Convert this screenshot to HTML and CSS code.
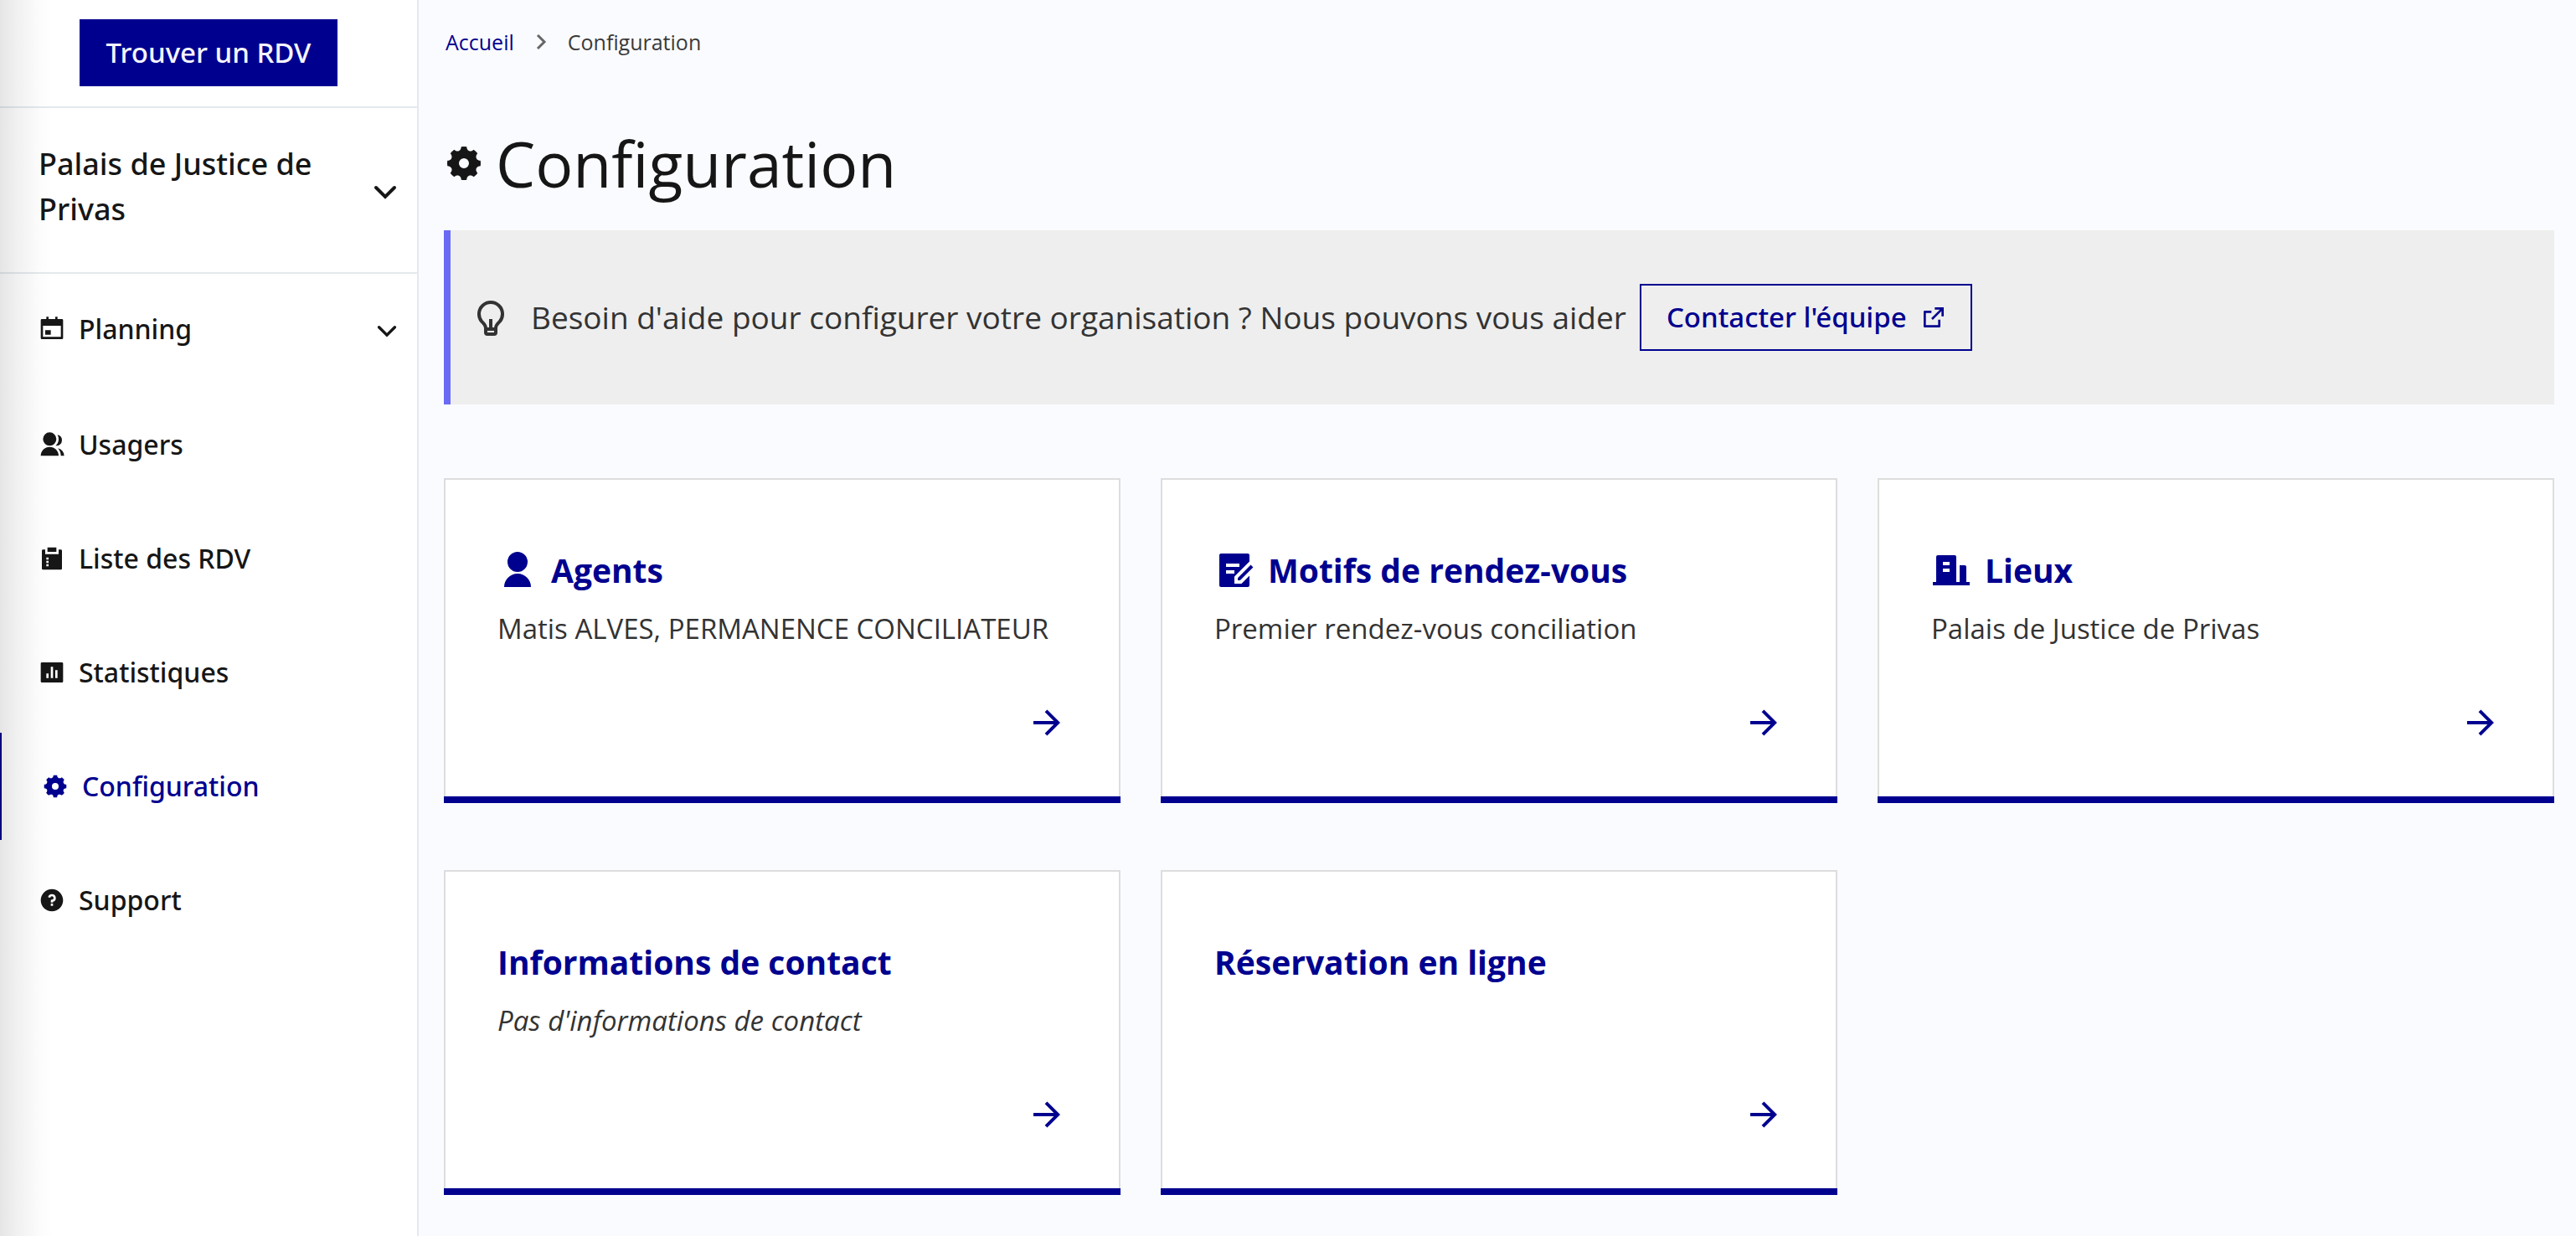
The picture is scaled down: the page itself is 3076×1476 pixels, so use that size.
FILE: index.html
```html
<!DOCTYPE html>
<html lang="fr">
<head>
  <meta charset="utf-8">
  <meta name="viewport" content="width=device-width, initial-scale=1">
  <title>Configuration</title>
  <link rel="stylesheet" href="styles.css">
</head>
<body>
  <svg class="sprite" aria-hidden="true">
    <symbol id="i-calendar" viewBox="0 0 24 24"><path d="M17 3h4a1 1 0 0 1 1 1v16a1 1 0 0 1-1 1H3a1 1 0 0 1-1-1V4a1 1 0 0 1 1-1h4V1h2v2h6V1h2v2zM4 9v10h16V9H4zm2 4h5v4H6v-4z"/></symbol>
    <symbol id="i-group" viewBox="0 0 24 24"><path d="M2 22a8 8 0 1 1 16 0H2zm8-9a6 6 0 1 1 0-12 6 6 0 0 1 0 12zm7.363 2.233A7.505 7.505 0 0 1 22.983 22H20c0-2.61-1-4.986-2.637-6.767zm-2.023-2.276A7.98 7.98 0 0 0 18 7a7.964 7.964 0 0 0-1.015-3.903A5 5 0 0 1 21 8a4.999 4.999 0 0 1-5.66 4.957z"/></symbol>
    <symbol id="i-todo" viewBox="0 0 24 24"><path d="M6 4v4h12V4h2.007c.548 0 .993.445.993.993v16.014a.994.994 0 0 1-.993.993H3.993A.994.994 0 0 1 3 21.007V4.993C3 4.445 3.445 4 3.993 4H6zm3 13H7v2h2v-2zm0-3H7v2h2v-2zm0-3H7v2h2v-2zm7-9v4H8V2h8z"/></symbol>
    <symbol id="i-chart" viewBox="0 0 24 24"><path d="M3 3h18a1 1 0 0 1 1 1v16a1 1 0 0 1-1 1H3a1 1 0 0 1-1-1V4a1 1 0 0 1 1-1zm4 10v4h2v-4H7zm4-6v10h2V7h-2zm4 3v7h2v-7h-2z"/></symbol>
    <symbol id="i-gear" viewBox="0 0 24 24"><path d="M2.132 13.63a9.942 9.942 0 0 1 0-3.26c1.102.026 2.092-.502 2.477-1.431.385-.93.058-2.004-.74-2.763a9.942 9.942 0 0 1 2.306-2.307c.76.798 1.834 1.125 2.764.74.93-.385 1.457-1.376 1.43-2.477a9.942 9.942 0 0 1 3.262 0c-.027 1.102.501 2.092 1.43 2.477.93.385 2.004.058 2.763-.74a9.942 9.942 0 0 1 2.307 2.306c-.798.76-1.125 1.834-.74 2.764.385.93 1.376 1.457 2.477 1.43a9.942 9.942 0 0 1 0 3.262c-1.102-.027-2.092.501-2.477 1.43-.385.93-.058 2.004.74 2.763a9.942 9.942 0 0 1-2.306 2.307c-.76-.798-1.834-1.125-2.764-.74-.93.385-1.457 1.376-1.43 2.477a9.942 9.942 0 0 1-3.262 0c.027-1.102-.501-2.092-1.43-2.477-.93-.385-2.004-.058-2.763.74a9.942 9.942 0 0 1-2.307-2.306c.798-.76 1.125-1.834.74-2.764-.385-.93-1.376-1.457-2.477-1.43zM12 15a3 3 0 1 0 0-6 3 3 0 0 0 0 6z"/></symbol>
    <symbol id="i-question" viewBox="0 0 24 24"><path d="M12 22C6.477 22 2 17.523 2 12S6.477 2 12 2s10 4.477 10 10-4.477 10-10 10zm-1-7v2h2v-2h-2zm2-1.645A3.502 3.502 0 0 0 12 6.5a3.501 3.501 0 0 0-3.433 2.813l1.962.393A1.5 1.5 0 1 1 12 11.5a1 1 0 0 0-1 1V14h2v-.645z"/></symbol>
    <symbol id="i-bulb" viewBox="0 0 24 24"><path d="M9.973 18H11v-5h2v5h1.027c.132-1.202.745-2.194 1.74-3.277.113-.122.832-.867.917-.973a6 6 0 1 0-9.37-.002c.086.107.807.853.918.974.996 1.084 1.609 2.076 1.741 3.278zM10 20v1h4v-1h-4zm-4.246-5a8 8 0 1 1 12.49.002C17.624 15.774 16 17 16 18.5V21a2 2 0 0 1-2 2h-4a2 2 0 0 1-2-2v-2.5C8 17 6.375 15.774 5.754 15z"/></symbol>
    <symbol id="i-external" viewBox="0 0 24 24"><path d="M10 6v2H5v11h11v-5h2v6a1 1 0 0 1-1 1H4a1 1 0 0 1-1-1V7a1 1 0 0 1 1-1h6zm11-3v8h-2V6.413l-7.793 7.794-1.414-1.414L17.585 5H13V3h8z"/></symbol>
    <symbol id="i-user" viewBox="0 0 24 24"><path d="M4 22a8 8 0 0 1 16 0H4zm8-9a6 6 0 1 1 0-12 6 6 0 0 1 0 12z"/></symbol>
    <symbol id="i-draft" viewBox="0 0 24 24"><path d="M20 2c.552 0 1 .448 1 1v3.757l-8.999 9-.006 4.238 4.246.006L21 15.242V21c0 .552-.448 1-1 1H4c-.552 0-1-.448-1-1V3c0-.552.448-1 1-1h16zm1.778 6.808l1.414 1.414L15.414 18l-1.416-.002.002-1.412 7.778-7.778zM12 12H7v2h5v-2zm3-4H7v2h8V8z"/></symbol>
    <symbol id="i-building" viewBox="0 0 24 24"><path d="M17 19V9h3a1 1 0 0 1 1 1v9h2v2H1v-2h2V4a1 1 0 0 1 1-1h10a1 1 0 0 1 1 1v15h2zM7 11v2h4v-2H7zm0-4v2h4V7H7z"/></symbol>
    <symbol id="i-arrow" viewBox="0 0 24 24"><path d="M16.172 11l-5.364-5.364 1.414-1.414L20 12l-7.778 7.778-1.414-1.414L16.172 13H4v-2z"/></symbol>
    <symbol id="i-down" viewBox="0 0 28 28"><path d="M3 9l11 11L25 9" fill="none" stroke="currentColor" stroke-width="4" stroke-linecap="round"/></symbol>
    <symbol id="i-right" viewBox="0 0 16 24"><path d="M4 4l8 8-8 8" fill="none" stroke="currentColor" stroke-width="3"/></symbol>
  </svg>

  <div class="layout">
    <aside class="sidebar">
      <div class="search">
        <button class="btn btn-primary" type="button">Trouver un RDV</button>
      </div>
      <button class="organisation" type="button">
        <span>Palais de Justice de Privas</span>
        <svg class="chevron chevron-lg" aria-hidden="true"><use href="#i-down"/></svg>
      </button>
      <nav class="menu" aria-label="Menu principal">
        <button class="menu-item menu-toggle" type="button">
          <svg class="icon-sm" aria-hidden="true"><use href="#i-calendar"/></svg>
          <span>Planning</span>
          <svg class="chevron" aria-hidden="true"><use href="#i-down"/></svg>
        </button>
        <a class="menu-item" href="#usagers"><svg class="icon-sm" aria-hidden="true"><use href="#i-group"/></svg><span>Usagers</span></a>
        <a class="menu-item" href="#rdv"><svg class="icon-sm" aria-hidden="true"><use href="#i-todo"/></svg><span>Liste des RDV</span></a>
        <a class="menu-item" href="#statistiques"><svg class="icon-sm" aria-hidden="true"><use href="#i-chart"/></svg><span>Statistiques</span></a>
        <a class="menu-item is-active" href="#configuration" aria-current="page"><svg class="icon-sm" aria-hidden="true"><use href="#i-gear"/></svg><span>Configuration</span></a>
        <a class="menu-item" href="#support"><svg class="icon-sm" aria-hidden="true"><use href="#i-question"/></svg><span>Support</span></a>
      </nav>
    </aside>

    <main class="content" id="configuration">
      <nav class="breadcrumb" aria-label="Fil d'Ariane">
        <a href="#accueil">Accueil</a>
        <svg class="separator" aria-hidden="true"><use href="#i-right"/></svg>
        <span aria-current="page">Configuration</span>
      </nav>

      <h1 class="title"><svg class="icon" aria-hidden="true"><use href="#i-gear"/></svg><span>Configuration</span></h1>

      <div class="callout">
        <svg class="icon callout-icon" aria-hidden="true"><use href="#i-bulb"/></svg>
        <p>Besoin d'aide pour configurer votre organisation ? Nous pouvons vous aider</p>
        <a class="btn btn-secondary" href="#contact"><span>Contacter l'équipe</span><svg class="icon-sm" aria-hidden="true"><use href="#i-external"/></svg></a>
      </div>

      <div class="cards">
        <article class="card">
          <h2><a href="#agents"><svg class="icon" aria-hidden="true"><use href="#i-user"/></svg><span>Agents</span></a></h2>
          <p>Matis ALVES, PERMANENCE CONCILIATEUR</p>
          <svg class="icon card-arrow" aria-hidden="true"><use href="#i-arrow"/></svg>
        </article>
        <article class="card">
          <h2><a href="#motifs"><svg class="icon" aria-hidden="true"><use href="#i-draft"/></svg><span>Motifs de rendez-vous</span></a></h2>
          <p>Premier rendez-vous conciliation</p>
          <svg class="icon card-arrow" aria-hidden="true"><use href="#i-arrow"/></svg>
        </article>
        <article class="card">
          <h2><a href="#lieux"><svg class="icon" aria-hidden="true"><use href="#i-building"/></svg><span>Lieux</span></a></h2>
          <p>Palais de Justice de Privas</p>
          <svg class="icon card-arrow" aria-hidden="true"><use href="#i-arrow"/></svg>
        </article>
        <article class="card">
          <h2><a href="#informations"><span>Informations de contact</span></a></h2>
          <p><em>Pas d'informations de contact</em></p>
          <svg class="icon card-arrow" aria-hidden="true"><use href="#i-arrow"/></svg>
        </article>
        <article class="card">
          <h2><a href="#reservation"><span>Réservation en ligne</span></a></h2>
          <svg class="icon card-arrow" aria-hidden="true"><use href="#i-arrow"/></svg>
        </article>
      </div>
    </main>
  </div>
</body>
</html>
```
FILE: styles.css
```css
:root {
  --blue: #00008f;
  --ink: #161616;
  --text: #333;
  --line: #e4e9ed;
}

* { box-sizing: border-box; }

body {
  margin: 0;
  background: #fafbff;
  color: var(--ink);
  font-family: "Open Sans", "Noto Sans", sans-serif;
  font-size: 33px;
}

h1, h2, p { margin: 0; }
a { color: var(--blue); text-decoration: none; }
button { font: inherit; color: inherit; cursor: pointer; }
svg { display: block; flex: none; fill: currentColor; }

.sprite { display: none; }
.icon { width: 48px; height: 48px; }
.icon-sm { width: 32px; height: 32px; }

.layout { display: flex; min-height: 100vh; }

/* Sidebar */
.sidebar {
  position: relative;
  flex: none;
  width: 500px;
  border-right: 2px solid var(--line);
  background: #fff;
}

.sidebar::before {
  content: "";
  position: absolute;
  inset: 0 auto 0 0;
  width: 64px;
  background: linear-gradient(to right, rgba(0, 0, 0, .1), rgba(0, 0, 0, .06) 30%, rgba(0, 0, 0, .01) 75%, transparent);
  pointer-events: none;
}

.search {
  display: flex;
  justify-content: center;
  padding: 23px 0 24px;
  border-bottom: 2px solid var(--line);
}

.btn {
  display: inline-flex;
  align-items: center;
  gap: 16px;
  height: 80px;
  padding: 0 32px;
  border: 0;
  font-family: "Noto Sans", sans-serif;
  font-size: 33px;
  line-height: 48px;
  font-weight: 500;
  white-space: nowrap;
}

.btn-primary { background: var(--blue); color: #f5f5fe; }

.btn-secondary {
  margin-left: 16px;
  padding: 0 28px 0 30px;
  border: 2px solid var(--blue);
  color: var(--blue);
}

.organisation {
  display: flex;
  align-items: center;
  justify-content: space-between;
  width: 100%;
  padding: 40px 24px 48px 46px;
  border: 0;
  border-bottom: 2px solid var(--line);
  background: none;
  font-family: "Noto Sans", sans-serif;
  font-size: 36px;
  font-weight: 500;
  line-height: 54px;
  text-align: left;
}

.organisation span { max-width: 360px; }

.menu { display: flex; flex-direction: column; gap: 8px; }

.menu-item {
  display: flex;
  align-items: center;
  gap: 16px;
  height: 128px;
  padding: 0 24px 0 46px;
  color: var(--ink);
  font-family: "Noto Sans", sans-serif;
  font-size: 32px;
  font-weight: 500;
  line-height: 48px;
}

.menu-toggle { height: 132px; border: 0; background: none; }

.menu-item.is-active {
  padding-left: 48px;
  border-left: 2px solid var(--blue);
  color: var(--blue);
}

.chevron { width: 24px; height: 24px; margin: 4px 0 0 auto; }
.chevron-lg { width: 28px; height: 28px; margin-top: 12px; }

/* Main column */
.content { flex: 1; min-width: 0; padding: 30px 26px 48px 30px; }

.breadcrumb {
  display: flex;
  align-items: center;
  gap: 24px;
  padding-left: 2px;
  color: #3a3a3a;
  font-size: 25px;
  line-height: 40px;
}

.separator { width: 16px; height: 24px; color: #666; }

.title {
  display: flex;
  align-items: center;
  gap: 14px;
  margin: 80px 0 35px;
  font-size: 75px;
  font-weight: 400;
  line-height: 90px;
}

.callout {
  display: flex;
  flex-wrap: wrap;
  align-items: center;
  padding: 64px 24px;
  border-left: 8px solid #6a6af4;
  background: #eee;
  color: var(--text);
  font-size: 37px;
  line-height: 56px;
}

.callout-icon { margin-right: 24px; }

.cards {
  display: grid;
  grid-template-columns: repeat(3, 1fr);
  gap: 88px 48px;
  margin-top: 88px;
}

.card {
  display: flex;
  flex-direction: column;
  min-height: 380px;
  padding: 80px 62px 64px;
  border: 2px solid #ddd;
  border-bottom: 0;
  background: #fff;
  box-shadow: 0 8px 0 var(--blue);
}

.card h2 { font-size: 39px; line-height: 56px; font-weight: 700; }
.card h2 a { display: flex; align-items: center; gap: 16px; }
.card p { margin-top: 18px; color: var(--text); line-height: 48px; white-space: nowrap; }
.card-arrow { margin: auto 0 0 auto; color: var(--blue); }
```
